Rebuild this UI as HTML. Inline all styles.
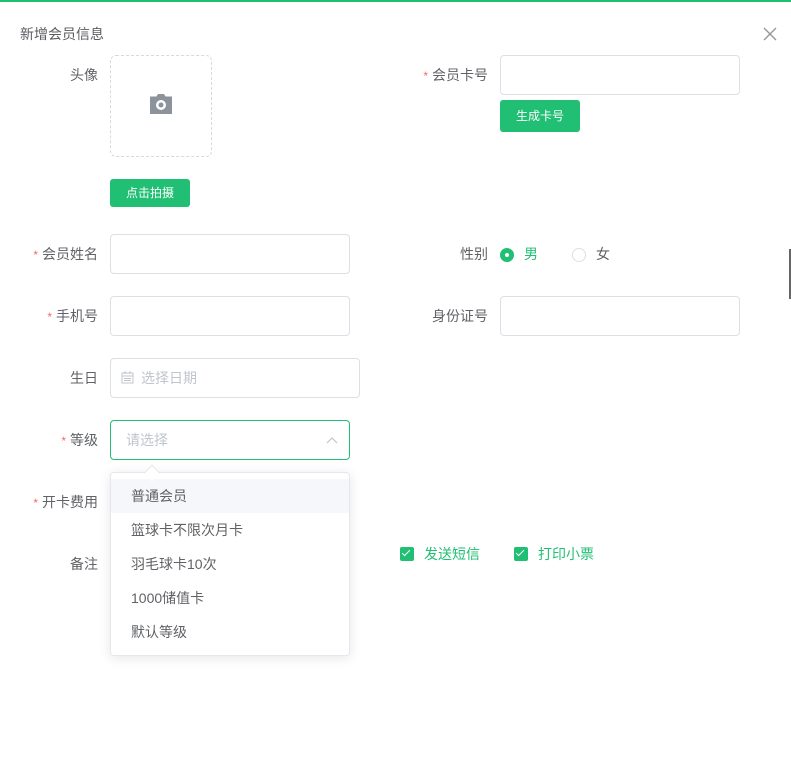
<!DOCTYPE html>
<html><head><meta charset="utf-8"><style>
*{margin:0;padding:0;box-sizing:border-box}
body{width:791px;height:762px;background:#fff;position:relative;overflow:hidden;font-family:"Liberation Sans","Noto Sans CJK SC",sans-serif;font-size:14px;color:#606266}
.a{position:absolute}
.lbl{position:absolute;text-align:right;width:200px;line-height:20px}
.star{color:#f56c6c;margin-right:4px;font-size:12px}
.inp{position:absolute;border:1px solid #dcdfe6;border-radius:4px;height:40px;background:#fff}
.btn{position:absolute;background:#20bf73;color:#fff;border-radius:3px;font-size:12px;text-align:center}
.item{height:34px;line-height:34px;padding-left:20px;color:#606266}
.cb{display:inline-block;width:14px;height:14px;background:#20bf73;border-radius:2px;vertical-align:-2px;margin-right:10px;position:relative}
.cb:after{content:"";position:absolute;left:4px;top:1px;width:3px;height:7px;border:solid #fff;border-width:0 1px 1px 0;transform:rotate(45deg)}
</style></head><body>
<div class="a" style="left:0;top:0;width:791px;height:2px;background:#20bf73"></div>
<div class="a" style="left:20px;top:24px;font-size:14px;color:#5a5c61;line-height:20px">新增会员信息</div>
<svg class="a" style="left:763px;top:27px" width="14" height="14"><path d="M1 1L13 13M13 1L1 13" stroke="#909399" stroke-width="1.3"/></svg>
<div class="a" style="left:789px;top:249px;width:2px;height:50px;background:#666"></div>

<div class="lbl" style="left:-102px;top:65px">头像</div>
<div class="a" style="left:110px;top:55px;width:102px;height:102px;border:1px dashed #d9d9d9;border-radius:6px"></div>
<svg class="a" style="left:149px;top:93px" width="24" height="23" viewBox="0 0 24 23"><path d="M7.5 3.5L9 1h6l1.5 2.5H23V21H1V3.5z" fill="#8c939d"/><circle cx="12" cy="12" r="5" fill="#fff"/><circle cx="12" cy="12" r="2.5" fill="#8c939d"/></svg>
<div class="btn" style="left:110px;top:179px;width:80px;height:28px;line-height:28px">点击拍摄</div>

<div class="lbl" style="left:288px;top:65px"><span class="star">*</span>会员卡号</div>
<div class="inp" style="left:500px;top:55px;width:240px"></div>
<div class="btn" style="left:500px;top:100px;width:80px;height:32px;line-height:32px">生成卡号</div>

<div class="lbl" style="left:-102px;top:244px"><span class="star">*</span>会员姓名</div>
<div class="inp" style="left:110px;top:234px;width:240px"></div>
<div class="lbl" style="left:288px;top:244px">性别</div>
<div class="a" style="left:500px;top:248px;width:14px;height:14px;border-radius:50%;background:#20bf73"><div class="a" style="left:5px;top:5px;width:4px;height:4px;border-radius:50%;background:#fff"></div></div>
<div class="a" style="left:524px;top:244px;line-height:20px;color:#20bf73">男</div>
<div class="a" style="left:572px;top:248px;width:14px;height:14px;border-radius:50%;border:1px solid #dcdfe6"></div>
<div class="a" style="left:596px;top:244px;line-height:20px">女</div>

<div class="lbl" style="left:-102px;top:306px"><span class="star">*</span>手机号</div>
<div class="inp" style="left:110px;top:296px;width:240px"></div>
<div class="lbl" style="left:288px;top:306px">身份证号</div>
<div class="inp" style="left:500px;top:296px;width:240px"></div>

<div class="lbl" style="left:-102px;top:368px">生日</div>
<div class="inp" style="left:110px;top:358px;width:250px"></div>
<svg class="a" style="left:121px;top:371px" width="13" height="13" viewBox="0 0 13 13"><rect x="1" y="2" width="11" height="10" fill="none" stroke="#c0c4cc"/><path d="M1 5h11M4 0v3M9 0v3M3 7.5h7M3 9.5h7" stroke="#c0c4cc"/></svg>
<div class="a" style="left:141px;top:368px;line-height:20px;color:#c0c4cc">选择日期</div>

<div class="lbl" style="left:-102px;top:430px"><span class="star">*</span>等级</div>
<div class="inp" style="left:110px;top:420px;width:240px;border-color:#20bf73"></div>
<div class="a" style="left:126px;top:430px;line-height:20px;color:#c0c4cc">请选择</div>
<svg class="a" style="left:326px;top:436px" width="12" height="8"><path d="M1 7L6 2L11 7" fill="none" stroke="#c0c4cc" stroke-width="1.2"/></svg>

<div class="lbl" style="left:-102px;top:492px"><span class="star">*</span>开卡费用</div>
<div class="lbl" style="left:-102px;top:554px">备注</div>

<div class="a" style="left:400px;top:544px;line-height:20px;color:#20bf73"><span class="cb"></span>发送短信</div>
<div class="a" style="left:514px;top:544px;line-height:20px;color:#20bf73"><span class="cb"></span>打印小票</div>

<div class="a" style="left:146px;top:467px;width:12px;height:12px;background:#fff;border-left:1px solid #e4e7ed;border-top:1px solid #e4e7ed;transform:rotate(45deg);z-index:2"></div>
<div class="a" style="left:110px;top:472px;width:240px;height:184px;border:1px solid #e4e7ed;border-radius:4px;background:#fff;box-shadow:0 2px 12px rgba(0,0,0,.1);padding-top:6px;z-index:1">
<div class="item" style="background:#f5f7fa">普通会员</div>
<div class="item">篮球卡不限次月卡</div>
<div class="item">羽毛球卡10次</div>
<div class="item">1000储值卡</div>
<div class="item">默认等级</div>
</div>
</body></html>
